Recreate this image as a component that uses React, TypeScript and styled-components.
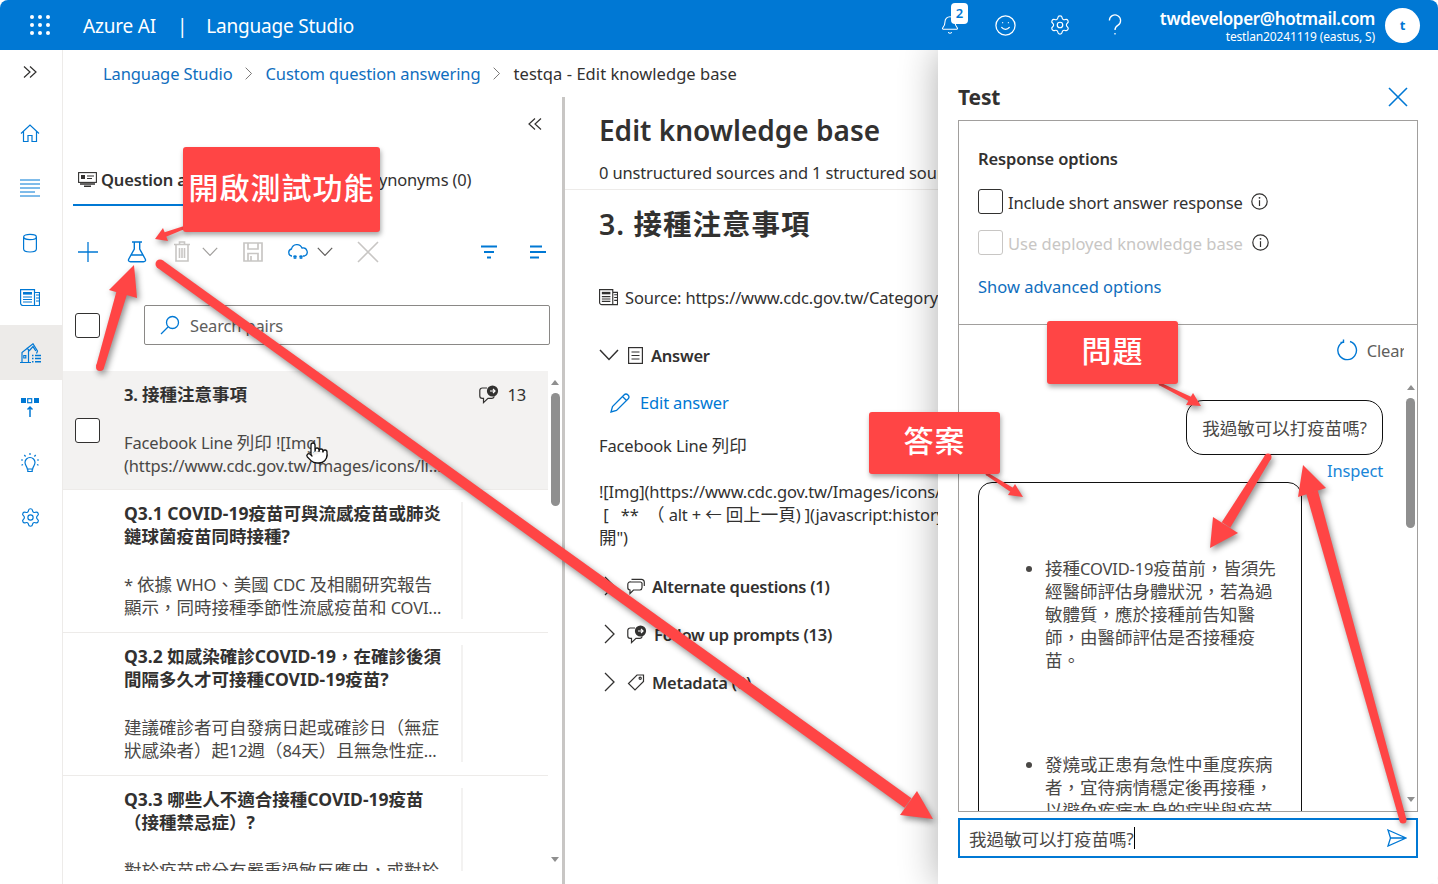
import React from "react";
import styled, { createGlobalStyle } from "styled-components";
import { Settings, Smile, Bell, Pointer } from "lucide-react";

const BLUE = "#0078d4";
const TEXT = "#323130";
const RED = "#ff4545";

const Global = createGlobalStyle`
  html, body { margin: 0; padding: 0; background: #fff; }
  * { box-sizing: border-box; }
  body { font-family: "Noto Sans", "Noto Sans CJK TC", sans-serif; color: ${TEXT}; }
`;

const Page = styled.div`
  position: relative;
  width: 1438px;
  height: 884px;
  overflow: hidden;
  display: flex;
  flex-direction: column;
  border-radius: 8px;
  background: #fff;
  font-size: 16.5px;
  letter-spacing: -0.15px;
`;

const Han = styled.span`
  font-size: 17.5px;
  letter-spacing: 0;
`;

/* ---------- top bar ---------- */
const Header = styled.header`
  position: relative;
  z-index: 3;
  flex: 0 0 50px;
  display: flex;
  align-items: center;
  background: ${BLUE};
  color: #fff;
`;
const Waffle = styled.div`
  margin-left: 30px;
  width: 20px;
  display: grid;
  grid-template-columns: repeat(3, 4px);
  grid-auto-rows: 4px;
  gap: 4px;
  span { background: #fff; border-radius: 50%; }
`;
const Brand = styled.span<{ $ml: number }>`
  font-size: 19px;
  letter-spacing: -0.2px;
  padding-top: 2px;
  margin-left: ${(p) => p.$ml}px;
`;
const HeaderIcons = styled.div`
  margin-left: auto;
  display: flex;
  align-items: center;
`;
const HeaderIcon = styled.span<{ $w: number }>`
  position: relative;
  width: ${(p) => p.$w}px;
  display: flex;
  justify-content: center;
`;
const Badge = styled.span`
  position: absolute;
  top: -12px;
  left: 28px;
  width: 17px;
  height: 21px;
  border-radius: 4px;
  background: #fff;
  color: ${BLUE};
  font-size: 13px;
  font-weight: 600;
  text-align: center;
  line-height: 21px;
`;
const Account = styled.div`
  margin: 4px 0 0 17px;
  text-align: right;
  white-space: nowrap;
`;
const Email = styled.div`
  font-size: 17px;
  font-weight: 600;
  line-height: 20px;
  letter-spacing: -0.35px;
`;
const Tenant = styled.div`
  font-size: 12px;
  line-height: 16px;
  letter-spacing: -0.15px;
`;
const Avatar = styled.div`
  margin: 0 18px 0 10px;
  width: 35px;
  height: 35px;
  border-radius: 50%;
  background: #fff;
  color: ${BLUE};
  font-size: 13px;
  font-weight: 700;
  display: flex;
  align-items: center;
  justify-content: center;
`;

/* ---------- body ---------- */
const Body = styled.div`
  flex: 1;
  display: flex;
  min-height: 0;
`;
const Sidebar = styled.nav`
  flex: 0 0 63px;
  border-right: 1px solid #edebe9;
  display: flex;
  flex-direction: column;
  color: ${BLUE};
`;
const SideToggle = styled.div`
  height: 55px;
  padding: 14px 2px 0 0;
  display: flex;
  justify-content: center;
  align-items: flex-start;
  color: ${TEXT};
`;
const SideItem = styled.div<{ $active?: boolean }>`
  height: 55px;
  padding-right: 2px;
  display: flex;
  align-items: center;
  justify-content: center;
  background: ${(p) => (p.$active ? "#edebe9" : "transparent")};
`;
const Main = styled.main`
  flex: 0 0 875px;
  display: flex;
  flex-direction: column;
  min-width: 0;
`;
const Breadcrumb = styled.div`
  flex: 0 0 47px;
  display: flex;
  align-items: center;
  padding-left: 40px;
  font-size: 16.5px;
  white-space: nowrap;
`;
const Crumb = styled.span<{ $link?: boolean }>`
  color: ${(p) => (p.$link ? "#106ebe" : TEXT)};
  letter-spacing: ${(p) => (p.$link ? "-0.1px" : "0.05px")};
`;
const CrumbSep = styled.span`
  width: 33px;
  display: flex;
  justify-content: center;
  color: #605e5c;
`;
const Panes = styled.div`
  flex: 1;
  display: flex;
  min-height: 0;
`;
const LeftPane = styled.section`
  flex: 0 0 499px;
  display: flex;
  flex-direction: column;
  min-width: 0;
`;
const LeftTop = styled.div`
  padding: 0 12px 0 10px;
`;
const CollapseRow = styled.div`
  height: 63px;
  padding: 19px 7px 0 0;
  display: flex;
  justify-content: flex-end;
  align-items: flex-start;
`;
const Tabs = styled.div`
  height: 46px;
  display: flex;
`;
const Tab = styled.div<{ $active?: boolean; $w: number }>`
  width: ${(p) => p.$w}px;
  display: flex;
  align-items: center;
  gap: 4px;
  padding: 0 0 6px ${(p) => (p.$active ? 5 : 0)}px;
  font-weight: ${(p) => (p.$active ? 600 : 400)};
  border-bottom: 2px solid ${(p) => (p.$active ? BLUE : "transparent")};
  white-space: nowrap;
  overflow: hidden;
`;
const Toolbar = styled.div`
  margin-top: 23px;
  height: 45px;
  display: flex;
  align-items: center;
`;
const ToolSlot = styled.span<{ $ml: number; $w?: number; $color?: string }>`
  margin-left: ${(p) => p.$ml}px;
  width: ${(p) => p.$w ?? 24}px;
  display: flex;
  justify-content: center;
  color: ${(p) => p.$color ?? BLUE};
`;
const ToolSpacer = styled.span`
  flex: 1;
`;
const SearchRow = styled.div`
  margin-top: 31px;
  height: 40px;
  display: flex;
  align-items: center;
`;
const CheckBox = styled.span<{ $disabled?: boolean; $ml?: number }>`
  flex: 0 0 25px;
  height: 25px;
  margin-left: ${(p) => p.$ml ?? 0}px;
  border: 1px solid ${(p) => (p.$disabled ? "#c8c6c4" : TEXT)};
  border-radius: 3px;
  background: #fff;
`;
const SearchBox = styled.div`
  margin-left: 44px;
  flex: 1;
  height: 40px;
  border: 1px solid #8a8886;
  border-radius: 2px;
  display: flex;
  align-items: center;
  gap: 10px;
  padding-left: 15px;
  color: #605e5c;
`;
const SearchGlyph = styled.span`
  display: flex;
  color: ${BLUE};
`;
const ListWrap = styled.div`
  margin-top: 26px;
  height: 500px;
  display: flex;
`;
const List = styled.div`
  flex: 0 0 485px;
  overflow: hidden;
`;
const Row = styled.article<{ $active?: boolean }>`
  display: flex;
  align-items: center;
  height: ${(p) => (p.$active ? 119 : 143)}px;
  background: ${(p) => (p.$active ? "#f3f2f1" : "#fff")};
  border-bottom: 1px solid #edebe9;
`;
const RowCheck = styled.div`
  flex: 0 0 61px;
  padding-left: 12px;
  display: flex;
`;
const RowContent = styled.div<{ $divided?: boolean }>`
  flex: 0 0 ${(p) => (p.$divided ? 339 : 402)}px;
  align-self: flex-start;
  margin-top: 12px;
  height: ${(p) => (p.$divided ? "117px" : "auto")};
  border-right: ${(p) => (p.$divided ? "2px solid #f3f2f1" : "none")};
`;
const RowTitle = styled.div`
  font-weight: 700;
  line-height: 23px;
  white-space: nowrap;
  display: flex;
  justify-content: space-between;
  align-items: center;
`;
const RowHeading = styled.div`
  font-size: 17.5px;
  font-weight: 700;
  line-height: 23px;
  letter-spacing: 0;
`;
const RowText = styled.div`
  margin-top: 25px;
  line-height: 23px;
  color: #4a4846;
  white-space: nowrap;
`;
const Line = styled.div`
  white-space: nowrap;
  overflow: hidden;
`;
const Count = styled.span`
  display: flex;
  align-items: center;
  gap: 8px;
  font-weight: 400;
`;
const ScrollTrack = styled.div<{ $w: number; $mt: number }>`
  flex: 0 0 ${(p) => p.$w}px;
  height: 100%;
  padding-top: ${(p) => p.$mt}px;
  display: flex;
  flex-direction: column;
  align-items: center;
`;
const ScrollThumb = styled.div<{ $h: number; $mt: number }>`
  width: 9px;
  height: ${(p) => p.$h}px;
  margin-top: ${(p) => p.$mt}px;
  border-radius: 5px;
  background: #8f8f8f;
`;
const ScrollUp = styled.div`
  width: 0;
  height: 0;
  border-left: 4.5px solid transparent;
  border-right: 4.5px solid transparent;
  border-bottom: 5px solid #8f8f8f;
`;
const ScrollDown = styled(ScrollUp)<{ $mb?: number }>`
  margin-top: auto;
  margin-bottom: ${(p) => p.$mb ?? 8}px;
  border-bottom: none;
  border-top: 5px solid #8f8f8f;
`;
const PaneDivider = styled.div`
  flex: 0 0 3px;
  background: #c8c6c4;
`;
const RightPane = styled.section`
  flex: 1;
  min-width: 0;
  overflow: hidden;
  white-space: nowrap;
`;
const DocHead = styled.div`
  padding: 13px 0 4px 34px;
  border-bottom: 1px solid #edebe9;
`;
const DocTitle = styled.h1`
  margin: 0 0 11px;
  font-size: 28px;
  line-height: 40px;
  font-weight: 600;
  letter-spacing: 0;
`;
const DocSub = styled.div`
  line-height: 24px;
`;
const DocBody = styled.div`
  padding-left: 34px;
`;
const DocH2 = styled.h2`
  margin: 14px 0 0;
  font-size: 28.5px;
  line-height: 40px;
  font-weight: 600;
  letter-spacing: 1px;
`;
const SourceRow = styled.div`
  margin-top: 42px;
  height: 23px;
  display: flex;
  align-items: center;
  gap: 7px;
  svg { flex: none; }
`;
const SectionHead = styled.div<{ $mt: number }>`
  margin-top: ${(p) => p.$mt}px;
  height: 24px;
  display: flex;
  align-items: center;
  font-weight: 600;
  letter-spacing: -0.25px;
`;
const Caret = styled.span`
  flex: 0 0 20px;
  display: flex;
  justify-content: center;
  margin-right: 8px;
`;
const SectionIcon = styled.span`
  flex: 0 0 17px;
  display: flex;
  justify-content: center;
  margin-right: 7px;
`;
const EditLink = styled.div`
  margin: 24px 0 0 11px;
  height: 23px;
  display: flex;
  align-items: center;
  gap: 10px;
  color: ${BLUE};
`;
const Para = styled.div<{ $mt: number }>`
  margin-top: ${(p) => p.$mt}px;
  line-height: 23px;
`;

/* ---------- test panel ---------- */
const TestPanel = styled.aside`
  position: relative;
  z-index: 2;
  flex: 0 0 500px;
  background: #fff;
  box-shadow: 0 0 36px rgba(0, 0, 0, 0.32);
  padding: 0 20px;
  display: flex;
  flex-direction: column;
`;
const TestHead = styled.div`
  flex: 0 0 70px;
  display: flex;
  align-items: center;
  justify-content: space-between;
  padding: 24px 10px 0 0;
  color: ${BLUE};
`;
const TestTitle = styled.h2`
  margin: 0;
  font-size: 21px;
  font-weight: 700;
  color: ${TEXT};
`;
const TestBox = styled.div`
  flex: 0 0 692px;
  border: 1px solid #a19f9d;
  display: flex;
  flex-direction: column;
  overflow: hidden;
`;
const Options = styled.div`
  flex: 0 0 204px;
  border-bottom: 1px solid #a19f9d;
  padding: 26px 19px 0;
`;
const OptionsTitle = styled.div`
  font-weight: 600;
  line-height: 24px;
  margin-bottom: 18px;
`;
const OptionRow = styled.label<{ $disabled?: boolean }>`
  height: 25px;
  margin-bottom: 16px;
  display: flex;
  align-items: center;
  gap: 5px;
  white-space: nowrap;
  letter-spacing: ${(p) => (p.$disabled ? "0" : "-0.15px")};
  color: ${(p) => (p.$disabled ? "#c8c6c4" : TEXT)};
`;
const OptionLabel = styled.span`
  padding-top: 1px;
`;
const InfoWrap = styled.span<{ $ml: number }>`
  margin-left: ${(p) => p.$ml}px;
  display: flex;
  color: ${TEXT};
`;
const AdvLink = styled.div`
  color: #106ebe;
  line-height: 24px;
  margin-top: 20px;
  letter-spacing: 0;
`;
const ChatArea = styled.div`
  flex: 1;
  min-height: 0;
  display: flex;
`;
const ChatBody = styled.div`
  flex: 1;
  min-width: 0;
  overflow: hidden;
  padding: 0 21px 0 19px;
`;
const ClearRow = styled.div`
  height: 50px;
  margin-right: -23px;
  display: flex;
  align-items: center;
  justify-content: flex-end;
  gap: 9px;
  color: ${BLUE};
  span { color: #605e5c; }
`;
const QuestionWrap = styled.div`
  margin-top: 25px;
  display: flex;
  justify-content: flex-end;
`;
const QuestionBubble = styled.div`
  width: 197px;
  height: 55px;
  border: 1px solid #111;
  border-radius: 17px;
  display: flex;
  align-items: center;
  justify-content: center;
  white-space: nowrap;
  color: #4a4846;
`;
const Inspect = styled.div`
  text-align: right;
  line-height: 24px;
  margin-top: 4px;
  color: #1a86d8;
`;
const AnswerBubble = styled.div`
  margin-top: -1px;
  width: 324px;
  height: 500px;
  border: 1px solid #111;
  border-radius: 14px 14px 0 0;
  padding-top: 74px;
`;
const AnswerList = styled.ul`
  margin: 0;
  padding-left: 66px;
  line-height: 23px;
  color: #4a4846;
`;
const AnswerItem = styled.li`
  white-space: nowrap;
  margin-bottom: 81px;
`;
const InputBox = styled.div`
  margin-top: 6px;
  flex: 0 0 40px;
  border: 2px solid ${BLUE};
  display: flex;
  align-items: center;
  padding: 0 9px;
  color: #4a4846;
  white-space: nowrap;
`;
const TextCaret = styled.span`
  width: 1px;
  height: 22px;
  background: #000;
`;
const SendBtn = styled.span`
  margin-left: auto;
  display: flex;
  color: ${BLUE};
`;

/* ---------- annotations ---------- */
const ArrowLayer = styled.svg`
  position: absolute;
  left: 0;
  top: 0;
  z-index: 5;
  pointer-events: none;
  filter: drop-shadow(2px 3px 3px rgba(0, 0, 0, 0.45));
`;
const Callout = styled.div<{ $x: number; $y: number; $w: number; $h: number }>`
  position: absolute;
  z-index: 6;
  left: ${(p) => p.$x}px;
  top: ${(p) => p.$y}px;
  width: ${(p) => p.$w}px;
  height: ${(p) => p.$h}px;
  padding-bottom: 8px;
  background: ${RED};
  border-radius: 3px;
  box-shadow: 1px 3px 5px rgba(0, 0, 0, 0.35);
  color: #fff;
  font-size: 30px;
  font-weight: 500;
  letter-spacing: 1px;
  display: flex;
  align-items: center;
  justify-content: center;
  white-space: nowrap;
`;
const CursorWrap = styled.span`
  position: absolute;
  z-index: 4;
  left: 305px;
  top: 441px;
  display: flex;
  color: #111;
`;

/* ---------- icons ---------- */
type IP = { s?: number; w?: number; h?: number; children?: React.ReactNode; sw?: number };
const Svg = ({ s = 20, w, h, sw = 1.2, children }: IP) => (
  <svg width={w ?? s} height={h ?? s} viewBox={`0 0 ${w ?? s} ${h ?? s}`} fill="none" stroke="currentColor" strokeWidth={sw}>
    {children}
  </svg>
);
const DoubleRight = () => (
  <Svg s={16}><path d="M2 2.5 L8 8 L2 13.5 M8 2.5 L14 8 L8 13.5" /></Svg>
);
const DoubleLeft = () => (
  <Svg s={16}><path d="M14 2.5 L8 8 L14 13.5 M8 2.5 L2 8 L8 13.5" /></Svg>
);
const HomeIco = () => (
  <Svg s={20}><path d="M1 10.5 L10 2 L19 10.5 M3.5 8.5 V18.5 H8 V12.5 H12 V18.5 H16.5 V8.5" /></Svg>
);
const LinesIco = () => (
  <Svg w={20} h={18} sw={1}><path d="M0 1 H20 M0 5 H20 M0 9 H20 M0 13 H15 M0 17 H20" /></Svg>
);
const CylIco = () => (
  <Svg w={16} h={20}>
    <ellipse cx="8" cy="4" rx="6.4" ry="2.6" />
    <path d="M1.6 4 V16 C1.6 18 4.5 19 8 19 C11.5 19 14.4 18 14.4 16 V4" />
  </Svg>
);
const NewsIco = ({ s = 20 }: { s?: number }) => (
  <svg width={s} height={s * 0.85} viewBox="0 0 20 17" fill="none" stroke="currentColor" strokeWidth="1.2">
    <path d="M14.5 3.5 H19.5 V16.5 H3 A2.4 2.4 0 0 1 .6 14 V.6 H14.5 V16" />
    <rect x="3" y="3" width="9" height="2.6" fill="currentColor" stroke="none" />
    <path d="M3 8 H12 M3 10.5 H12 M3 13 H12 M16 6 H19 M16 9 H19 M16 12 H19" />
  </svg>
);
const CraneIco = () => (
  <Svg w={21} h={20}>
    <path d="M0 19.5 H11 M2 19.5 V9.5 L7 5.5 L8.5 6.5 V19.5 M3.8 12.5 H5.8 V15 H3.8 Z" />
    <path d="M7 5.5 L13 .8 L17.5 8 L16.5 10.5 M9 8 L13 3.6 L15.8 8" />
    <path d="M12 12.5 H13.5 M15 12.5 H21 M12 15.5 H13.5 M15 15.5 H21 M12 18.8 H13.5 M15 18.8 H21" strokeWidth="1.4" />
  </Svg>
);
const UploadIco = () => (
  <Svg w={20} h={21}>
    <rect x="1" y="1" width="5" height="5" fill="currentColor" stroke="none" />
    <rect x="7.7" y="1.7" width="4" height="4" />
    <rect x="14" y="1" width="5" height="5" fill="currentColor" stroke="none" />
    <path d="M10 20 V10 M7.5 12.5 L10 10 L12.5 12.5" strokeWidth="1.5" />
  </Svg>
);
const BulbIco = () => (
  <Svg w={20} h={21}>
    <path d="M7.3 17 C7.3 14.5 5 13.5 5 10.5 A5 5 0 0 1 15 10.5 C15 13.5 12.7 14.5 12.7 17 Z M7.8 17 V19.5 H12.2 V17" />
    <path d="M10 1 V3 M4.3 3 L5.6 4.5 M15.7 3 L14.4 4.5 M1 8 H3 M17 8 H19 M1.5 13.3 L3 12.5 M18.5 13.3 L17 12.5" />
  </Svg>
);
const ChevDown = ({ s = 16 }: { s?: number }) => (
  <svg width={s} height={s * 0.6} viewBox="0 0 20 12" fill="none" stroke="currentColor" strokeWidth="1.5"><path d="M1 1 L10 10.5 L19 1" /></svg>
);
const ChevRight = ({ h = 20 }: { h?: number }) => (
  <svg width={h * 0.55} height={h} viewBox="0 0 11 20" fill="none" stroke="currentColor" strokeWidth="1.3"><path d="M1 1 L10 10 L1 19" /></svg>
);
const PlusIco = () => <Svg s={22} sw={1.3}><path d="M11 1 V21 M1 11 H21" /></Svg>;
const FlaskIco = () => (
  <Svg w={20} h={22} sw={1.4}>
    <path d="M5 1 H15 M7.3 1 V8 L1.8 18 C1 19.6 1.8 20.8 3.5 20.8 H16.5 C18.2 20.8 19 19.6 18.2 18 L12.7 8 V1 M4.6 14 H15.4" />
  </Svg>
);
const TrashIco = () => (
  <Svg w={18} h={21} sw={1.6}>
    <path d="M1 3.5 H17 M6.5 3.5 V1 H11.5 V3.5 M3 3.5 V20 H15 V3.5 M6.5 7 V17 M9 7 V17 M11.5 7 V17" />
  </Svg>
);
const SaveIco = () => (
  <Svg s={20} sw={1.7}>
    <path d="M1 1 H19 V19 H1 Z M5 1 V7 H15 V1 M5 19 V11.5 H15 V19 M8 14 V19" />
  </Svg>
);
const CloudIco = () => (
  <svg width="22" height="18" viewBox="0 0 22 18" fill="none" stroke="currentColor" strokeWidth="1.3">
    <path d="M5 13 H4.5 A3.6 3.6 0 0 1 4.5 6 A5.5 5.5 0 0 1 15 5 A4.2 4.2 0 0 1 17.5 13 H16" />
    <path d="M8 12 V16 M6.3 13 L9.7 15 M9.7 13 L6.3 15 M14 12 V16 M12.3 13 L15.7 15 M15.7 13 L12.3 15" strokeWidth="1.2" />
  </svg>
);
const CrossIco = ({ s = 20, sw = 1.6 }: { s?: number; sw?: number }) => (
  <Svg s={s} sw={sw}><path d={`M1 1 L${s - 1} ${s - 1} M${s - 1} 1 L1 ${s - 1}`} /></Svg>
);
const FilterIco = () => (
  <Svg w={16} h={14} sw={2}><path d="M0 1.5 H16 M3 7 H13 M6 12.5 H10" /></Svg>
);
const SortIco = () => (
  <Svg w={16} h={14} sw={2}><path d="M0 1.5 H12 M0 7 H16 M0 12.5 H9" /></Svg>
);
const SearchIco = () => (
  <Svg s={20} sw={1.3}><circle cx="12.5" cy="7.5" r="6" /><path d="M8 12 L1 19" /></Svg>
);
const TabIco = () => (
  <Svg w={19} h={15} sw={1.1}>
    <rect x=".6" y=".6" width="17.8" height="9.8" />
    <rect x="3" y="3" width="4" height="4" fill="currentColor" stroke="none" />
    <path d="M9 4 H16 M9 6.5 H14" />
    <path d="M2 12 H17" strokeWidth="1.6" />
    <path d="M6 14.2 H13" strokeWidth="1.4" />
  </Svg>
);
const PromptIco = () => (
  <svg width="20" height="19" viewBox="0 0 20 19" fill="none" stroke="currentColor" strokeWidth="1.2">
    <path d="M8 3 H3.2 A2.4 2.4 0 0 0 .8 5.4 V11 A2.4 2.4 0 0 0 3.2 13.4 H4.5 V17.6 L9 13.4 H13 A2.4 2.4 0 0 0 15.2 11.4" />
    <circle cx="13.5" cy="6" r="5.6" fill="currentColor" stroke="none" />
    <path d="M11 6 H16 M14 4 L16 6 L14 8" stroke="#fff" strokeWidth="1.2" />
  </svg>
);
const ChatsIco = () => (
  <svg width="18" height="17" viewBox="0 0 18 17" fill="none" stroke="currentColor" strokeWidth="1.2">
    <path d="M4 4 H13.5 A2 2 0 0 1 15 6.5 V9.5 A2.5 2.5 0 0 1 13 12 H6.5 L3 15.5 V12 A2.4 2.4 0 0 1 .8 9.5 V6.5 A2.4 2.4 0 0 1 4 4 Z" />
    <path d="M4.5 1.4 H14.5 A2.8 2.8 0 0 1 17.3 4.2 V8" />
  </svg>
);
const TagIco = () => (
  <Svg w={18} h={17}>
    <path d="M10 1 H16.5 V7.5 L8 16 L1.5 9.5 Z" />
    <circle cx="13.2" cy="4.3" r="1.1" />
  </Svg>
);
const DocIco = () => (
  <Svg w={15} h={17} sw={1.2}>
    <rect x=".6" y=".6" width="13.8" height="15.8" />
    <path d="M3.5 5 H11.5 M3.5 8.5 H11.5 M3.5 12 H11.5" />
  </Svg>
);
const PencilIco = () => (
  <Svg s={20} sw={1.3}>
    <path d="M1 19 L2.5 13.5 L14 2 A2.4 2.4 0 0 1 18 6 L6.5 17.5 Z M12.5 3.5 L16.5 7.5" />
  </Svg>
);
const InfoIco = () => (
  <Svg s={17} sw={1.2}>
    <circle cx="8.5" cy="8.5" r="7.7" />
    <path d="M8.5 7.2 V13" />
    <circle cx="8.5" cy="4.8" r=".9" fill="currentColor" stroke="none" />
  </Svg>
);
const RefreshIco = () => (
  <Svg s={22} sw={1.4}>
    <path d="M7.5 2.8 A9.3 9.3 0 1 0 14 2.5" />
    <path d="M7.5 .5 V3.4 H4.5" />
  </Svg>
);
const SendIco = () => (
  <Svg w={20} h={18} sw={1.3}>
    <path d="M1 1 L19 9 L1 17 L3.5 9 Z M3.5 9 H19" />
  </Svg>
);
const HelpIco = () => (
  <Svg w={14} h={22} sw={1.3}>
    <path d="M1.4 6.5 A5.6 5.6 0 1 1 9.8 11.4 C8 12.4 7 13.6 7 16" />
    <path d="M7 19 V20.6" />
  </Svg>
);

/* Chinese runs are set a little larger than the Latin text around them. */
const T = ({ children }: { children: string }) => (
  <>
    {children
      .split(/([\u3000-\u9fff\uff00-\uffef]+)/)
      .map((part, i) => (i % 2 ? <Han key={i}>{part}</Han> : part))}
  </>
);

const rows = [
  {
    title: ["Q3.1 COVID-19疫苗可與流感疫苗或肺炎", "鏈球菌疫苗同時接種?"],
    body: ["* 依據 WHO、美國 CDC 及相關研究報告", "顯示，同時接種季節性流感疫苗和 COVI..."],
  },
  {
    title: ["Q3.2 如感染確診COVID-19，在確診後須", "間隔多久才可接種COVID-19疫苗?"],
    body: ["建議確診者可自發病日起或確診日（無症", "狀感染者）起12週（84天）且無急性症..."],
  },
  {
    title: ["Q3.3 哪些人不適合接種COVID-19疫苗", "（接種禁忌症）?"],
    body: ["對於疫苗成分有嚴重過敏反應史，或對於", "先前接種疫苗劑次發生嚴重過敏反應者"],
  },
];

const answerItems = [
  ["接種COVID-19疫苗前，皆須先", "經醫師評估身體狀況，若為過", "敏體質，應於接種前告知醫", "師，由醫師評估是否接種疫", "苗。"],
  ["發燒或正患有急性中重度疾病", "者，宜待病情穩定後再接種，", "以避免疾病本身的症狀與疫苗"],
];

/* A hand-drawn style annotation arrow: the shaft widens from tail to head. */
const Arrow = ({ tail, neck, head, w }: { tail: [number, number]; neck: [number, number]; head: string; w: [number, number] }) => {
  const dx = neck[0] - tail[0];
  const dy = neck[1] - tail[1];
  const len = Math.hypot(dx, dy);
  const nx = -dy / len;
  const ny = dx / len;
  const a = w[0] / 2;
  const b = w[1] / 2;
  const shaft = [
    [tail[0] + nx * a, tail[1] + ny * a],
    [neck[0] + nx * b, neck[1] + ny * b],
    [neck[0] - nx * b, neck[1] - ny * b],
    [tail[0] - nx * a, tail[1] - ny * a],
  ]
    .map((p) => p.join(","))
    .join(" ");
  return (
    <g fill={RED}>
      <circle cx={tail[0]} cy={tail[1]} r={a} />
      <polygon points={shaft} />
      <polygon points={head} />
    </g>
  );
};

export default function App() {
  return (
    <Page>
      <Global />
      <Header>
        <Waffle>{Array.from({ length: 9 }, (_, i) => <span key={i} />)}</Waffle>
        <Brand $ml={33}>Azure AI</Brand>
        <Brand $ml={21}>|</Brand>
        <Brand $ml={19}>Language Studio</Brand>
        <HeaderIcons>
          <HeaderIcon $w={55}><Bell size={20} strokeWidth={1.3} /><Badge>2</Badge></HeaderIcon>
          <HeaderIcon $w={55}><Smile size={23} strokeWidth={1.3} /></HeaderIcon>
          <HeaderIcon $w={55}><Settings size={22} strokeWidth={1.3} /></HeaderIcon>
          <HeaderIcon $w={55}><HelpIco /></HeaderIcon>
        </HeaderIcons>
        <Account>
          <Email>twdeveloper@hotmail.com</Email>
          <Tenant>testlan20241119 (eastus, S)</Tenant>
        </Account>
        <Avatar>t</Avatar>
      </Header>
      <Body>
        <Sidebar>
          <SideToggle><DoubleRight /></SideToggle>
          <SideItem><HomeIco /></SideItem>
          <SideItem><LinesIco /></SideItem>
          <SideItem><CylIco /></SideItem>
          <SideItem><NewsIco /></SideItem>
          <SideItem $active><CraneIco /></SideItem>
          <SideItem><UploadIco /></SideItem>
          <SideItem><BulbIco /></SideItem>
          <SideItem><Settings size={21} strokeWidth={1.3} /></SideItem>
        </Sidebar>
        <Main>
          <Breadcrumb>
            <Crumb $link>Language Studio</Crumb>
            <CrumbSep><ChevRight h={13} /></CrumbSep>
            <Crumb $link>Custom question answering</Crumb>
            <CrumbSep><ChevRight h={13} /></CrumbSep>
            <Crumb>testqa - Edit knowledge base</Crumb>
          </Breadcrumb>
          <Panes>
            <LeftPane>
              <LeftTop>
                <CollapseRow><DoubleLeft /></CollapseRow>
                <Tabs>
                  <Tab $active $w={297}><TabIco />Question answer pairs</Tab>
                  <Tab $w={140}>Synonyms (0)</Tab>
                </Tabs>
                <Toolbar>
                  <ToolSlot $ml={3}><PlusIco /></ToolSlot>
                  <ToolSlot $ml={25}><FlaskIco /></ToolSlot>
                  <ToolSlot $ml={21} $color="#c8c6c4"><TrashIco /></ToolSlot>
                  <ToolSlot $ml={8} $w={16} $color="#a19f9d"><ChevDown /></ToolSlot>
                  <ToolSlot $ml={23} $color="#c8c6c4"><SaveIco /></ToolSlot>
                  <ToolSlot $ml={21}><CloudIco /></ToolSlot>
                  <ToolSlot $ml={7} $w={16} $color="#605e5c"><ChevDown /></ToolSlot>
                  <ToolSlot $ml={23} $color="#c8c6c4"><CrossIco s={22} /></ToolSlot>
                  <ToolSpacer />
                  <ToolSlot $ml={0}><FilterIco /></ToolSlot>
                  <ToolSlot $ml={25}><SortIco /></ToolSlot>
                </Toolbar>
                <SearchRow>
                  <CheckBox $ml={2} />
                  <SearchBox><SearchGlyph><SearchIco /></SearchGlyph>Search pairs</SearchBox>
                </SearchRow>
              </LeftTop>
              <ListWrap>
                <List>
                  <Row $active>
                    <RowCheck><CheckBox /></RowCheck>
                    <RowContent>
                      <RowTitle><span><T>3. 接種注意事項</T></span><Count><PromptIco />13</Count></RowTitle>
                      <RowText>
                        <Line><T>Facebook Line 列印 ![Img]</T></Line>
                        <Line>(https://www.cdc.gov.tw/Images/icons/li...</Line>
                      </RowText>
                    </RowContent>
                  </Row>
                  {rows.map((r) => (
                    <Row key={r.title[0]}>
                      <RowCheck />
                      <RowContent $divided>
                        <RowHeading>
                          {r.title.map((t) => <Line key={t}><T>{t}</T></Line>)}
                        </RowHeading>
                        <RowText>{r.body.map((t) => <Line key={t}><T>{t}</T></Line>)}</RowText>
                      </RowContent>
                    </Row>
                  ))}
                </List>
                <ScrollTrack $w={14} $mt={9}>
                  <ScrollUp />
                  <ScrollThumb $h={113} $mt={8} />
                  <ScrollDown $mb={9} />
                </ScrollTrack>
              </ListWrap>
            </LeftPane>
            <PaneDivider />
            <RightPane>
              <DocHead>
                <DocTitle>Edit knowledge base</DocTitle>
                <DocSub>0 unstructured sources and 1 structured sources</DocSub>
              </DocHead>
              <DocBody>
                <DocH2>3. 接種注意事項</DocH2>
                <SourceRow><NewsIco s={19} />Source: https://www.cdc.gov.tw/Category/MPage/epidemic</SourceRow>
                <SectionHead $mt={34}><Caret><ChevDown s={20} /></Caret><SectionIcon><DocIco /></SectionIcon>Answer</SectionHead>
                <EditLink><PencilIco />Edit answer</EditLink>
                <Para $mt={20}><T>Facebook Line 列印</T></Para>
                <Para $mt={23}>
                  ![Img](https://www.cdc.gov.tw/Images/icons/line.png)<br />
                  <T>{"\u00a0[\u00a0\u00a0\u00a0**\u00a0\u00a0（ alt + ← 回上一頁) ](javascript:history.back() \"回上一頁\")"}</T><br />
                  <T>開")</T>
                </Para>
                <SectionHead $mt={25}><Caret><ChevRight h={20} /></Caret><SectionIcon><ChatsIco /></SectionIcon>Alternate questions (1)</SectionHead>
                <SectionHead $mt={24}><Caret><ChevRight h={20} /></Caret><SectionIcon><PromptIco /></SectionIcon>Follow up prompts (13)</SectionHead>
                <SectionHead $mt={24}><Caret><ChevRight h={20} /></Caret><SectionIcon><TagIco /></SectionIcon>Metadata (0)</SectionHead>
              </DocBody>
            </RightPane>
          </Panes>
        </Main>
        <TestPanel>
          <TestHead>
            <TestTitle>Test</TestTitle>
            <CrossIco s={20} sw={1.6} />
          </TestHead>
          <TestBox>
            <Options>
              <OptionsTitle>Response options</OptionsTitle>
              <OptionRow><CheckBox /><OptionLabel>Include short answer response</OptionLabel><InfoWrap $ml={3}><InfoIco /></InfoWrap></OptionRow>
              <OptionRow $disabled><CheckBox $disabled /><OptionLabel>Use deployed knowledge base</OptionLabel><InfoWrap $ml={4}><InfoIco /></InfoWrap></OptionRow>
              <AdvLink>Show advanced options</AdvLink>
            </Options>
            <ChatArea>
              <ChatBody>
                <ClearRow><RefreshIco /><span>Clear</span></ClearRow>
                <QuestionWrap><QuestionBubble><T>我過敏可以打疫苗嗎?</T></QuestionBubble></QuestionWrap>
                <Inspect>Inspect</Inspect>
                <AnswerBubble>
                  <AnswerList>
                    {answerItems.map((lines) => (
                      <AnswerItem key={lines[0]}>
                        {lines.map((t) => <Line key={t}><T>{t}</T></Line>)}
                      </AnswerItem>
                    ))}
                  </AnswerList>
                </AnswerBubble>
              </ChatBody>
              <ScrollTrack $w={13} $mt={60}>
                <ScrollUp />
                <ScrollThumb $h={130} $mt={8} />
                <ScrollDown $mb={9} />
              </ScrollTrack>
            </ChatArea>
          </TestBox>
          <InputBox><T>我過敏可以打疫苗嗎?</T><TextCaret /><SendBtn><SendIco /></SendBtn></InputBox>
        </TestPanel>
      </Body>

      <CursorWrap><Pointer size={24} strokeWidth={1.3} fill="#fff" /></CursorWrap>
      <ArrowLayer width="1438" height="884" viewBox="0 0 1438 884">
        <Arrow tail={[183, 228]} neck={[164, 235]} head="155,239 163,228 168,241" w={[3, 5]} />
        <Arrow tail={[100, 367]} neck={[122, 292]} head="134,265 109,290 137,298" w={[8, 11]} />
        <Arrow tail={[160, 264]} neck={[908, 803]} head="933,819 917,791 900,815" w={[9, 12]} />
        <Arrow tail={[1160, 384]} neck={[1192, 400]} head="1201,406 1186,405 1193,393" w={[3, 5]} />
        <Arrow tail={[987, 474]} neck={[1012, 490]} head="1023,497 1008,495 1015,484" w={[3, 5]} />
        <Arrow tail={[1268, 457]} neck={[1226, 525]} head="1210,548 1213,517 1238,533" w={[7, 10]} />
        <Arrow tail={[1403, 820]} neck={[1312, 492]} head="1303,465 1298,497 1326,488" w={[7, 12]} />
      </ArrowLayer>
      <Callout $x={183} $y={147} $w={197} $h={85}>開啟測試功能</Callout>
      <Callout $x={1047} $y={321} $w={131} $h={63}>問題</Callout>
      <Callout $x={869} $y={412} $w={131} $h={62}>答案</Callout>
    </Page>
  );
}
